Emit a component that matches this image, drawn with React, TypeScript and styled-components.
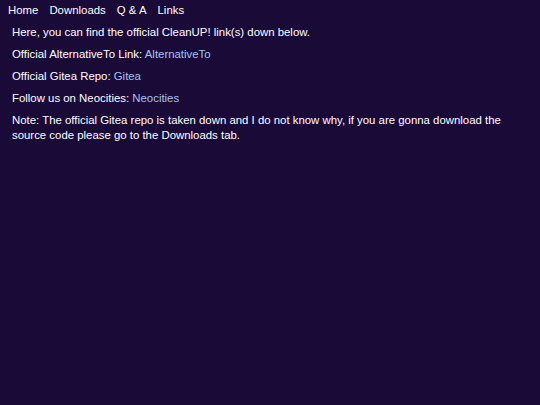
import React from "react";
import styled, { createGlobalStyle } from "styled-components";

const Global = createGlobalStyle`
  html, body {
    margin: 0;
    padding: 0;
    background: #1a0a38;
    min-height: 100%;
  }
  body {
    font-family: "Liberation Sans", Arial, sans-serif;
    font-size: 11.4px;
    line-height: 15px;
    color: #ffffff;
  }
`;

const Page = styled.div`
  min-height: 405px;
  background: #1a0a38;
`;

const Nav = styled.nav`
  display: flex;
  gap: 11px;
  padding: 2.5px 8px 0;
`;

const NavLink = styled.a`
  color: #ffffff;
  text-decoration: none;
`;

const Content = styled.main`
  display: flex;
  flex-direction: column;
  gap: 7px;
  padding: 7px 30px 0 12px;
`;

const Para = styled.p`
  margin: 0;
`;

const Link = styled.a`
  color: #a6c4ef;
  text-decoration: none;
`;

export default function App() {
  return (
    <Page>
      <Global />
      <Nav>
        <NavLink href="#">Home</NavLink>
        <NavLink href="#">Downloads</NavLink>
        <NavLink href="#">Q &amp; A</NavLink>
        <NavLink href="#">Links</NavLink>
      </Nav>
      <Content>
        <Para>Here, you can find the official CleanUP! link(s) down below.</Para>
        <Para>
          Official AlternativeTo Link: <Link href="#">AlternativeTo</Link>
        </Para>
        <Para>
          Official Gitea Repo: <Link href="#">Gitea</Link>
        </Para>
        <Para>
          Follow us on Neocities: <Link href="#">Neocities</Link>
        </Para>
        <Para>
          Note: The official Gitea repo is taken down and I do not know why, if you are gonna download the source code please go to the Downloads tab.
        </Para>
      </Content>
    </Page>
  );
}
